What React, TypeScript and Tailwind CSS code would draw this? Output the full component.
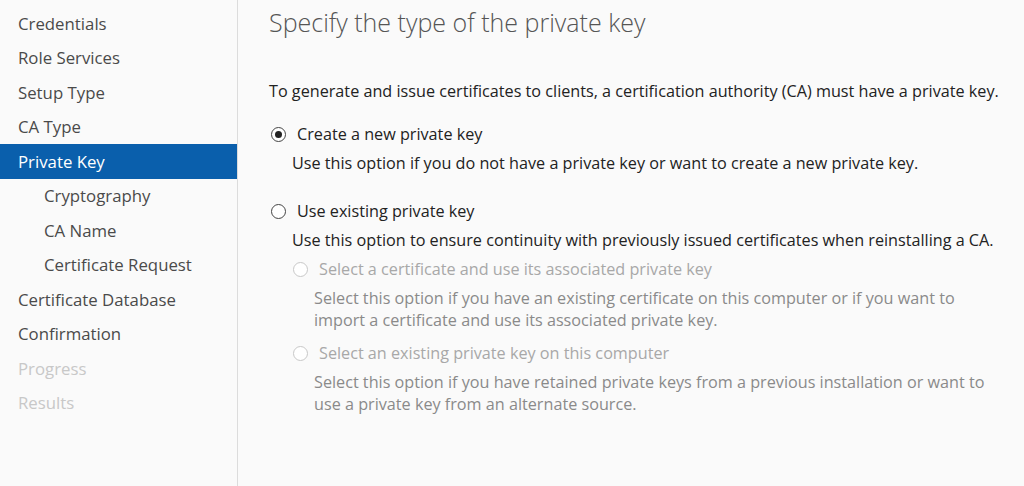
import { ReactNode } from "react"

const font = { fontFamily: '"Open Sans", "Noto Sans", sans-serif' }

interface NavItem {
  label: string
  sub?: boolean
  selected?: boolean
  disabled?: boolean
}

const NAV: NavItem[] = [
  { label: "Credentials" },
  { label: "Role Services" },
  { label: "Setup Type" },
  { label: "CA Type" },
  { label: "Private Key", selected: true },
  { label: "Cryptography", sub: true },
  { label: "CA Name", sub: true },
  { label: "Certificate Request", sub: true },
  { label: "Certificate Database" },
  { label: "Confirmation" },
  { label: "Progress", disabled: true },
  { label: "Results", disabled: true },
]

function Radio({ checked, disabled }: { checked?: boolean; disabled?: boolean }) {
  return (
    <span
      className={`w-[15px] h-[15px] rounded-full border flex items-center justify-center shrink-0 bg-white ${
        disabled ? "border-[#c8c8c8]" : "border-[#444]"
      }`}
    >
      {checked && <span className="w-[7px] h-[7px] rounded-full bg-[#222]" />}
    </span>
  )
}

function Option({
  label,
  children,
  checked,
  disabled,
}: {
  label: string
  children: ReactNode
  checked?: boolean
  disabled?: boolean
}) {
  return (
    <div>
      <div className={`flex items-center gap-[11px] h-[22px] ${disabled ? "text-[#a8a8a8]" : "text-[#222]"}`}>
        <Radio checked={checked} disabled={disabled} />
        <span>{label}</span>
      </div>
      <p className={`pl-[21px] leading-[22px] mt-[7px] ${disabled ? "text-[#8a8a8a]" : "text-[#222]"}`}>{children}</p>
    </div>
  )
}

export default function App() {
  return (
    <div className="w-[1024px] h-[486px] bg-[#fafafa] flex overflow-hidden" style={font}>
      <nav className="w-[238px] pt-[6px] border-r border-[#dcdcdc] shrink-0">
        {NAV.map((item) => (
          <div
            key={item.label}
            className={`h-[34.5px] flex items-center text-[16.8px] ${item.sub ? "pl-[44px]" : "pl-[18px]"} ${
              item.selected
                ? "bg-[#0a5fac] text-white"
                : item.disabled
                ? "text-[#c8c8c8]"
                : "text-[#4a4a4a]"
            }`}
          >
            {item.label}
          </div>
        ))}
      </nav>

      <main className="flex-1 pl-[31px] pt-[6px]">
        <h1 className="text-[25px] font-light text-[#555] leading-[32px]">Specify the type of the private key</h1>
        <p className="mt-[42px] text-[16.2px] text-[#222] leading-[22px] whitespace-nowrap">
          To generate and issue certificates to clients, a certification authority (CA) must have a private key.
        </p>

        <div className="mt-[21px] pl-[2px] text-[16.2px] flex flex-col gap-[26px] whitespace-nowrap">
          <Option label="Create a new private key" checked>
            Use this option if you do not have a private key or want to create a new private key.
          </Option>

          <div>
            <Option label="Use existing private key">
              Use this option to ensure continuity with previously issued certificates when reinstalling a CA.
            </Option>

            <div className="pl-[22px] mt-[7px] flex flex-col gap-[11px]">
              <Option label="Select a certificate and use its associated private key" disabled>
                Select this option if you have an existing certificate on this computer or if you want to
                <br />
                import a certificate and use its associated private key.
              </Option>
              <Option label="Select an existing private key on this computer" disabled>
                Select this option if you have retained private keys from a previous installation or want to
                <br />
                use a private key from an alternate source.
              </Option>
            </div>
          </div>
        </div>
      </main>
    </div>
  )
}
